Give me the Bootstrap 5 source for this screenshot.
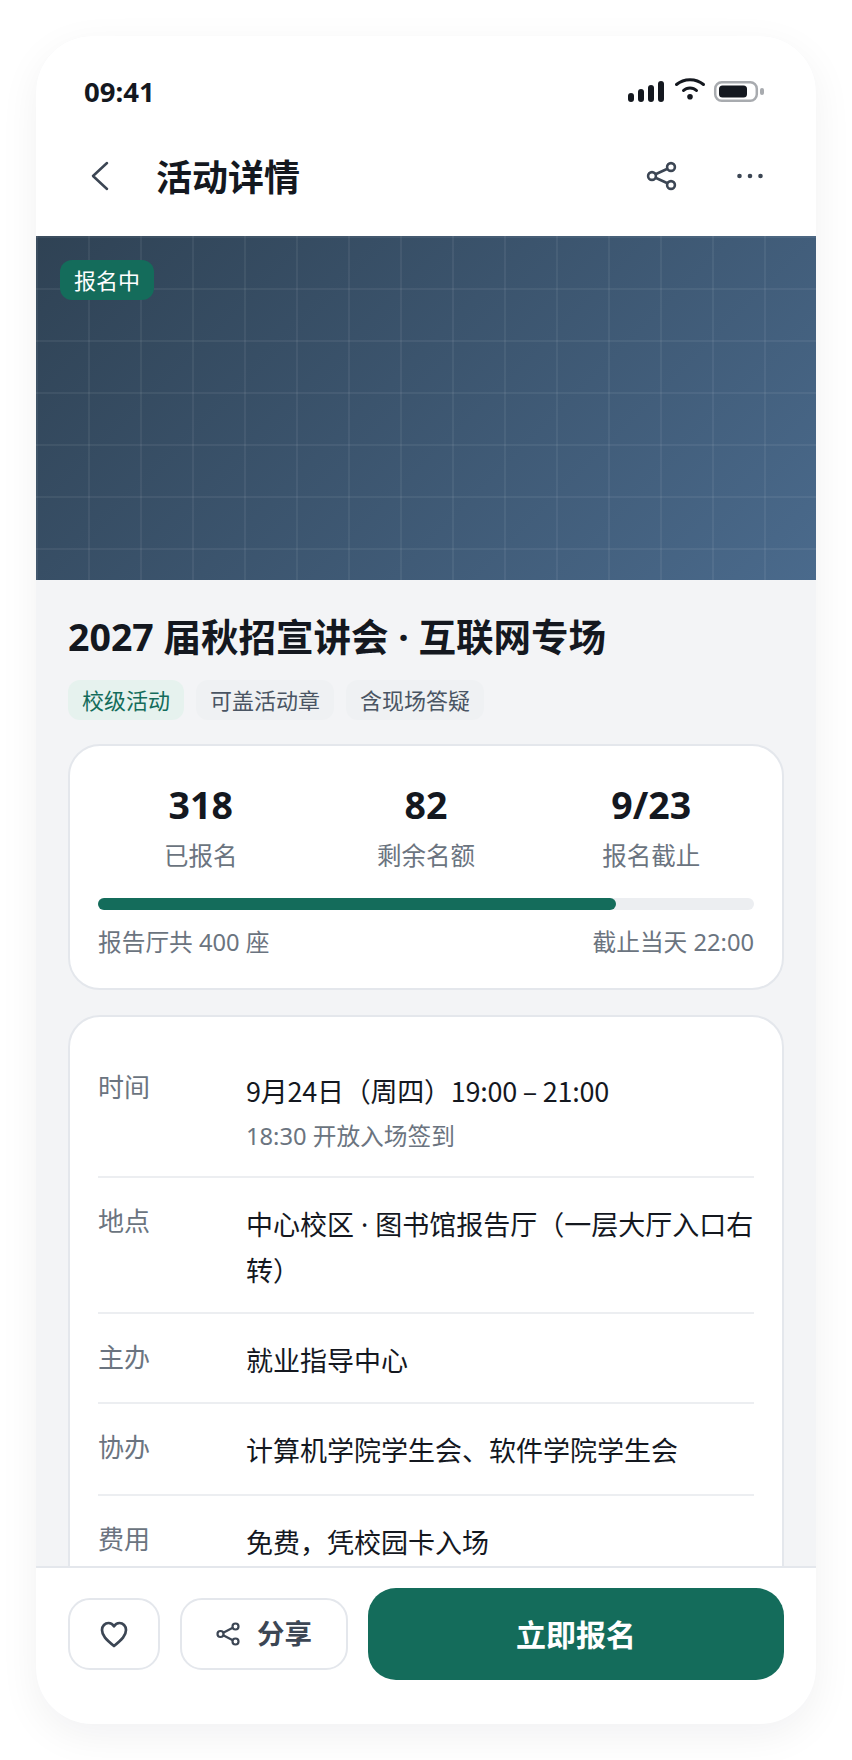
<!DOCTYPE html>
<html lang="zh-CN">
<head>
    <meta charset="UTF-8">
    <meta name="viewport" content="width=device-width, initial-scale=1.0">
    <title>活动详情</title>
    <link href="https://cdn.jsdelivr.net/npm/bootstrap@5.3.0/dist/css/bootstrap.min.css" rel="stylesheet">
    <style>
        body { background: #fff; font-family: "Noto Sans", "Noto Sans CJK SC", sans-serif; color: #14181f; }
        .phone-shell { width: 780px; height: 1688px; margin: 36px; border-radius: 56px; overflow: hidden; background: #f3f4f6; box-shadow: 0 12px 40px rgba(20, 24, 31, .06); }
        .status-row { height: 80px; padding: 39px 52px 0 48px; background: #fff; }
        .status-row svg { margin-top: 3px; }
        .status-time { font-size: 27.5px; font-weight: 700; line-height: 34px; }
        .nav-row { height: 120px; padding: 0 34px 0 32px; background: #fff; }
        .nav-title { font-size: 36px; font-weight: 700; margin: 0 0 0 24px; padding-top: 4px; line-height: 48px; }
        .icon-slot { width: 64px; height: 64px; background: none; border: 0; padding: 0; color: #3c4654; }
        .hero-box { height: 344px; padding: 24px; background-color: #3d566e;
            background-image:
                linear-gradient(90deg, rgba(255, 255, 255, .06) 2px, transparent 2px),
                linear-gradient(rgba(255, 255, 255, .06) 2px, transparent 2px),
                linear-gradient(135deg, #2f4254, #4a6a8c);
            background-size: 52px 52px, 52px 52px, 100% 100%; }
        .status-pill { background: #146c5b; color: #fff; font-size: 22px; line-height: 40px; padding: 0 14px; border-radius: 12px; }
        .page-body { padding: 32px 32px 0; }
        .event-title { font-size: 37.5px; font-weight: 700; line-height: 50px; margin: 0 0 18px; }
        .tag-row { gap: 12px; margin-bottom: 24px; }
        .tag-chip { background: #eff1f3; color: #4a5563; font-size: 22px; line-height: 40px; padding: 0 14px; border-radius: 12px; }
        .tag-green { background: #e6f2ee; color: #146c5b; }
        .panel-box { background: #fff; border: 2px solid #e4e7ec; border-radius: 32px; padding: 27px 28px; }
        .stat-panel { padding: 35px 28px 30px; margin-bottom: 25px; }
        .stat-grid { grid-template-columns: repeat(3, 1fr); column-gap: 20px; margin-bottom: 24px; }
        .stat-num { font-size: 37.5px; font-weight: 700; line-height: 48px; margin-bottom: 9px; }
        .stat-label { font-size: 24.5px; color: #6b7480; line-height: 36px; }
        .meter-track { height: 12px; border-radius: 6px; background: #eceef1; }
        .meter-fill { height: 100%; border-radius: 6px; background: #146c5b; }
        .meter-note { font-size: 23.7px; color: #6b7480; line-height: 32px; margin-top: 16px; }
        .info-label { width: 148px; font-size: 26px; color: #6b7480; line-height: 38px; }
        .info-row { padding: 24px 0 18px; border-bottom: 2px solid #eceef1; }
        .info-row:nth-child(4) { padding-bottom: 20px; }
        .info-value { font-size: 27px; line-height: 46px; }
        .date-line { font-family: "Noto Sans CJK SC", "Noto Sans", sans-serif; letter-spacing: -.25px; }
        .info-sub { font-size: 23.7px; color: #6b7480; line-height: 44px; }
        .bottom-bar { background: #fff; border-top: 2px solid #e4e7ec; padding: 20px 32px 44px; gap: 20px; }
        .ghost-btn { height: 72px; border: 2px solid #e4e7ec; border-radius: 22px; background: #fff; color: #3c4654; font-size: 27.5px; font-weight: 700; }
        .like-btn { width: 92px; }
        .share-btn { width: 168px; gap: 17px; }
        .main-btn { height: 92px; border-radius: 28px; background: #146c5b; color: #fff; border: 0; font-size: 30px; font-weight: 700; }
    </style>
</head>
<body>
    <div class="phone-shell d-flex flex-column">
        <div class="status-row d-flex justify-content-between align-items-start flex-shrink-0">
            <span class="status-time">09:41</span>
            <svg width="136" height="25" viewBox="0 0 136 25">
                <g fill="#14181f"><rect x="0" y="15" width="6" height="9" rx="3"/><rect x="10" y="11" width="6" height="13" rx="3"/><rect x="20" y="7" width="6" height="17" rx="3"/><rect x="30" y="3" width="6" height="21" rx="3"/><circle cx="62" cy="18.700" r="2.800"/></g>
                <path d="M48.500 6.500C56 0 68 0 75.500 6.500M55.500 12.500C59 9 65 9 68.500 12.500" fill="none" stroke="#14181f" stroke-width="3" stroke-linecap="round"/>
                <rect x="87.200" y="4.200" width="41.600" height="18.600" rx="6.500" fill="none" stroke="#a8abaf" stroke-width="2.500"/>
                <rect x="91" y="7.500" width="28" height="12" rx="3.500" fill="#14181f"/>
                <rect x="132" y="10" width="4" height="7" rx="2" fill="#a8abaf"/>
            </svg>
        </div>
        <div class="nav-row d-flex align-items-center flex-shrink-0">
            <button class="icon-slot d-flex align-items-center justify-content-center" type="button">
                <svg width="20" height="32" viewBox="0 0 20 32" fill="none" stroke="currentColor" stroke-width="2.500" stroke-linecap="round" stroke-linejoin="round"><path d="M17 3 3 16l14 13"/></svg>
            </button>
            <h1 class="nav-title flex-grow-1">活动详情</h1>
            <button class="icon-slot d-flex align-items-center justify-content-center me-4" type="button">
                <svg width="36" height="36" viewBox="0 0 36 36" fill="none" stroke="currentColor" stroke-width="2.600"><circle cx="8" cy="18" r="3.900"/><circle cx="27" cy="9" r="3.900"/><circle cx="27" cy="27" r="3.900"/><path d="M11.500 16.300 23.500 10.700M11.500 19.700l12 5.600"/></svg>
            </button>
            <button class="icon-slot d-flex align-items-center justify-content-center" type="button">
                <svg width="32" height="8" viewBox="0 0 32 8" fill="currentColor"><circle cx="5.500" cy="4" r="2.300"/><circle cx="16" cy="4" r="2.300"/><circle cx="26.500" cy="4" r="2.300"/></svg>
            </button>
        </div>
        <div class="flex-grow-1 overflow-hidden">
            <div class="hero-box d-flex align-items-start">
                <span class="status-pill">报名中</span>
            </div>
            <div class="page-body">
                <h2 class="event-title">2027 届秋招宣讲会 · 互联网专场</h2>
                <div class="d-flex tag-row">
                    <span class="tag-chip tag-green">校级活动</span>
                    <span class="tag-chip">可盖活动章</span>
                    <span class="tag-chip">含现场答疑</span>
                </div>
                <div class="panel-box stat-panel">
                    <div class="d-grid stat-grid text-center">
                        <div><div class="stat-num">318</div><div class="stat-label">已报名</div></div>
                        <div><div class="stat-num">82</div><div class="stat-label">剩余名额</div></div>
                        <div><div class="stat-num">9/23</div><div class="stat-label">报名截止</div></div>
                    </div>
                    <div class="meter-track"><div class="meter-fill" style="width: 79%"></div></div>
                    <div class="d-flex justify-content-between meter-note"><span>报告厅共 400 座</span><span>截止当天 22:00</span></div>
                </div>
                <div class="panel-box">
                    <div class="info-row d-flex"><div class="info-label flex-shrink-0">时间</div><div><div class="info-value date-line">9月24日（周四）19:00 – 21:00</div><div class="info-sub">18:30 开放入场签到</div></div></div>
                    <div class="info-row d-flex"><div class="info-label flex-shrink-0">地点</div><div class="info-value">中心校区 · 图书馆报告厅（一层大厅入口右转）</div></div>
                    <div class="info-row d-flex"><div class="info-label flex-shrink-0">主办</div><div class="info-value">就业指导中心</div></div>
                    <div class="info-row d-flex"><div class="info-label flex-shrink-0">协办</div><div class="info-value">计算机学院学生会、软件学院学生会</div></div>
                    <div class="info-row d-flex"><div class="info-label flex-shrink-0">费用</div><div class="info-value">免费，凭校园卡入场</div></div>
                </div>
            </div>
        </div>
        <div class="bottom-bar d-flex align-items-center flex-shrink-0">
            <button class="ghost-btn like-btn d-flex align-items-center justify-content-center flex-shrink-0" type="button">
                <svg width="28" height="27" viewBox="0 0 28 27" fill="none" stroke="currentColor" stroke-width="2.700" stroke-linejoin="round"><path d="M14 25C6 18.500 2 14.500 2 9 2 5 5 2 8.500 2c2.300 0 4.300 1.200 5.500 3.300C15.200 3.200 17.200 2 19.500 2 23 2 26 5 26 9c0 5.500-4 9.500-12 16Z"/></svg>
            </button>
            <button class="ghost-btn share-btn d-flex align-items-center justify-content-center flex-shrink-0" type="button">
                <svg width="24" height="24" viewBox="0 0 24 24" fill="none" stroke="currentColor" stroke-width="2.200"><circle cx="4.500" cy="12" r="3"/><circle cx="19.500" cy="4.500" r="3"/><circle cx="19.500" cy="19.500" r="3"/><path d="m7.200 10.700 9.600-4.900M7.200 13.300l9.600 4.900"/></svg>
                <span>分享</span>
            </button>
            <button class="main-btn flex-grow-1" type="button">立即报名</button>
        </div>
    </div>
    <script src="https://cdn.jsdelivr.net/npm/bootstrap@5.3.0/dist/js/bootstrap.bundle.min.js"></script>
</body>
</html>
